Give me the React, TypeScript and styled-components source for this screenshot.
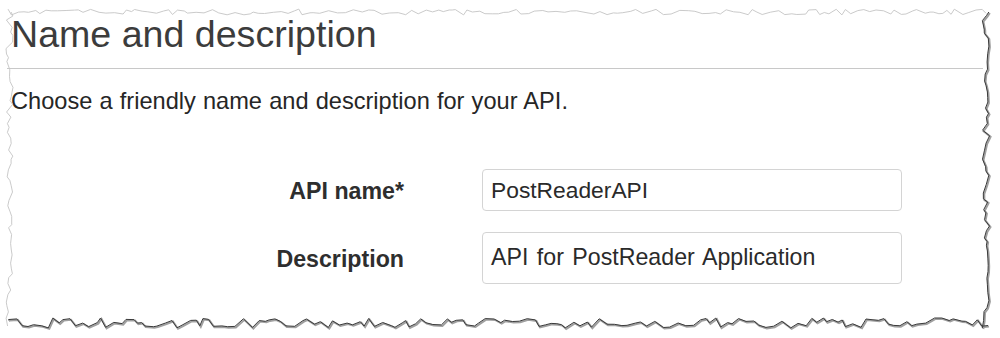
import React, {FC} from 'react';
import styled, {createGlobalStyle} from 'styled-components';

const GlobalStyle = createGlobalStyle`
  html, body {
    margin: 0;
    padding: 0;
    background: #fff;
  }
  body {
    font-family: 'Liberation Sans', Arial, Helvetica, sans-serif;
    color: #333;
  }
`;

// small seeded random so the torn edge is the same on every render
const makeRand = (seed: number) => () => {
  seed |= 0;
  seed = (seed + 0x6d2b79f5) | 0;
  let t = Math.imul(seed ^ (seed >>> 15), 1 | seed);
  t = (t + Math.imul(t ^ (t >>> 7), 61 | t)) ^ t;
  return ((t ^ (t >>> 14)) >>> 0) / 4294967296;
};

const edge = (
  rand: () => number,
  from: number,
  to: number,
  base: number,
  amp: number,
  horizontal: boolean,
) => {
  const pts: string[] = [];
  const dir = to > from ? 1 : -1;
  let p = from;
  while (dir > 0 ? p < to : p > to) {
    const q = base + rand() * amp;
    pts.push(horizontal ? `${p.toFixed(1)},${q.toFixed(1)}` : `${q.toFixed(1)},${p.toFixed(1)}`);
    p += dir * (3 + rand() * 6);
  }
  const q = base + rand() * amp;
  pts.push(horizontal ? `${to},${q.toFixed(1)}` : `${q.toFixed(1)},${to}`);
  return pts.join(' ');
};

const TornEdge: FC = () => {
  const rand = makeRand(7);
  const top = edge(rand, 8, 986, 9, 6, true);
  const right = edge(rand, 12, 328, 982, 8, false);
  const bottom = edge(rand, 988, 8, 318, 10, true);
  const left = edge(rand, 326, 12, 6, 7, false);
  return (
    <EdgeSvg width={1000} height={338} viewBox="0 0 1000 338">
      <polyline points={top} fill="none" stroke="#c4c4c4" strokeWidth={0.9} />
      <polyline points={left} fill="none" stroke="#c4c4c4" strokeWidth={0.9} />
      <polyline points={right} fill="none" stroke="#a0a0a0" strokeWidth={2} transform="translate(1 1)" />
      <polyline points={bottom} fill="none" stroke="#a0a0a0" strokeWidth={2} transform="translate(1 1)" />
      <polyline points={right} fill="none" stroke="#3a3a3a" strokeWidth={1} />
      <polyline points={bottom} fill="none" stroke="#3a3a3a" strokeWidth={1} />
    </EdgeSvg>
  );
};

const Field: FC<{label: string; value: string; tall?: boolean}> = ({label, value, tall}) => (
  <>
    <Label>{label}</Label>
    {tall ? <TextArea defaultValue={value} rows={1} /> : <Input defaultValue={value} />}
  </>
);

export default function App() {
  return (
    <Page>
      <GlobalStyle />
      <Header>
        <Title>Name and description</Title>
      </Header>
      <Intro>Choose a friendly name and description for your API.</Intro>
      <Form>
        <Field label="API name*" value="PostReaderAPI" />
        <Field label="Description" value="API for PostReader Application" tall />
      </Form>
      <TornEdge />
    </Page>
  );
}

const Page = styled.div`
  position: relative;
  width: 1000px;
  height: 338px;
  overflow: hidden;
  padding: 12px 17px 0 7px;
  box-sizing: border-box;
`;

const EdgeSvg = styled.svg`
  position: absolute;
  left: 0;
  top: 0;
  pointer-events: none;
`;

const Header = styled.div`
  border-bottom: 1px solid #c8c8c8;
  padding: 0 0 12px 4px;
`;

const Title = styled.h1`
  margin: 0;
  font-size: 37.6px;
  line-height: 44px;
  font-weight: 400;
  color: #3c3c3c;
`;

const Intro = styled.p`
  margin: 18px 0 0 4px;
  font-size: 23.6px;
  line-height: 28px;
  word-spacing: 0.6px;
  color: #262626;
`;

const Form = styled.div`
  display: grid;
  grid-template-columns: 393px 420px;
  column-gap: 78px;
  row-gap: 21px;
  align-items: center;
  margin: 54px 0 0 4px;
`;

const Label = styled.label`
  padding-top: 1px;
  text-align: right;
  font-size: 23.2px;
  line-height: 28px;
  font-weight: 700;
  color: #2e2e2e;
`;

const Input = styled.input`
  box-sizing: border-box;
  width: 420px;
  height: 42px;
  padding: 0 8px;
  border: 1px solid #d4d4d4;
  border-radius: 4px;
  font-family: 'Liberation Sans', Arial, sans-serif;
  font-size: 22.8px;
  color: #2a2a2a;
  background: #fff;
  outline: none;
`;

const TextArea = styled.textarea`
  box-sizing: border-box;
  width: 420px;
  height: 52px;
  padding: 10px 8px 0;
  border: 1px solid #d4d4d4;
  border-radius: 4px;
  font-family: 'Liberation Sans', Arial, sans-serif;
  font-size: 23.2px;
  line-height: 28px;
  word-spacing: 2px;
  color: #2a2a2a;
  background: #fff;
  resize: none;
  overflow: hidden;
  outline: none;
  display: block;
`;
